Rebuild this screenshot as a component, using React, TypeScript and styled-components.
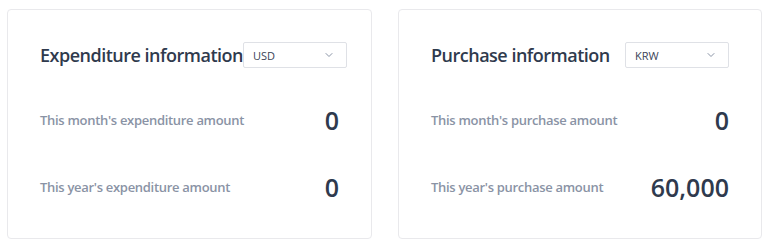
import styled, { createGlobalStyle } from 'styled-components';

const GlobalStyle = createGlobalStyle`
  body {
    margin: 0;
    background: #fff;
    font-family: 'Open Sans', 'Noto Sans', sans-serif;
  }
`;

interface Stat {
  label: string;
  value: string;
}

interface InfoCardProps {
  title: string;
  currency: string;
  stats: Stat[];
}

const ChevronDown = () => (
  <svg width="10" height="10" viewBox="0 0 10 10" fill="none">
    <path d="M2 3.5L5 6.5L8 3.5" stroke="#8a94a6" strokeWidth="1" strokeLinecap="round" strokeLinejoin="round" />
  </svg>
);

const InfoCard = ({ title, currency, stats }: InfoCardProps) => {
  return (
    <Card>
      <CardHeader>
        <Title>{title}</Title>
        <Select>
          <span>{currency}</span>
          <ChevronDown />
        </Select>
      </CardHeader>
      <StatList>
        {stats.map((s) => (
          <StatRow key={s.label}>
            <Label>{s.label}</Label>
            <Value>{s.value}</Value>
          </StatRow>
        ))}
      </StatList>
    </Card>
  );
};

const App = () => {
  return (
    <>
      <GlobalStyle />
      <Wrapper>
        <InfoCard
          title="Expenditure information"
          currency="USD"
          stats={[
            { label: "This month's expenditure amount", value: '0' },
            { label: "This year's expenditure amount", value: '0' },
          ]}
        />
        <InfoCard
          title="Purchase information"
          currency="KRW"
          stats={[
            { label: "This month's purchase amount", value: '0' },
            { label: "This year's purchase amount", value: '60,000' },
          ]}
        />
      </Wrapper>
    </>
  );
};

export default App;

const Wrapper = styled.div`
  display: grid;
  grid-template-columns: 365px 364px;
  gap: 26px;
  padding: 9px 7px;
`;

const Card = styled.div`
  background: #fff;
  border: 1px solid #e9e9ec;
  border-radius: 4px;
  height: 230px;
  box-sizing: border-box;
  padding: 32px;
  display: flex;
  flex-direction: column;
`;

const CardHeader = styled.div`
  display: flex;
  justify-content: space-between;
  align-items: center;
  height: 26px;
`;

const Title = styled.h2`
  margin: 0;
  font-size: 18px;
  font-weight: 600;
  letter-spacing: -0.5px;
  color: #2f3a4d;
  white-space: nowrap;
`;

const Select = styled.div`
  flex-shrink: 0;
  width: 104px;
  height: 26px;
  box-sizing: border-box;
  border: 1px solid #dfe1e6;
  border-radius: 2px;
  padding: 0 12px 0 9px;
  display: flex;
  align-items: center;
  justify-content: space-between;
  font-size: 11px;
  color: #3b4456;
`;

const StatList = styled.div`
  display: flex;
  flex-direction: column;
  gap: 31px;
  margin-top: 34px;
`;

const StatRow = styled.div`
  display: flex;
  justify-content: space-between;
  align-items: center;
  height: 36px;
`;

const Label = styled.span`
  font-size: 13px;
  font-weight: 600;
  letter-spacing: -0.3px;
  color: #8a93a5;
`;

const Value = styled.span`
  font-size: 25px;
  font-weight: 600;
  color: #2f3a4d;
`;
